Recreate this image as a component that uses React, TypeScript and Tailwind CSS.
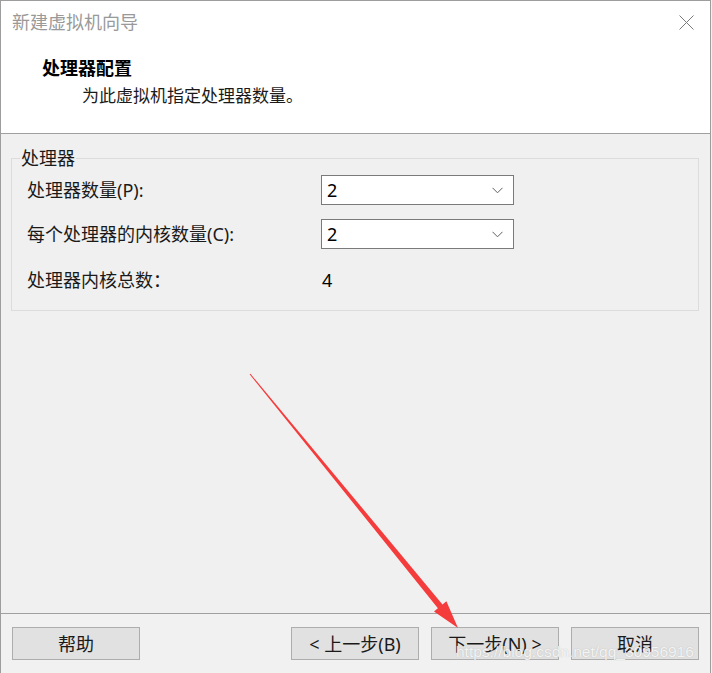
import React from 'react';

const font = { fontFamily: '"Noto Sans", "Noto Sans CJK SC", sans-serif' };

const Chevron = () => (
    <svg width="11" height="7" viewBox="0 0 11 7" className="text-[#606060]">
        <path d="M0.5 0.8 L5.5 5.8 L10.5 0.8" fill="none" stroke="currentColor" strokeWidth="1" />
    </svg>
);

const Select = ({ value }: { value: string }) => (
    <div className="w-[193px] h-[30px] bg-white border border-[#7a7a7a] flex items-center justify-between pl-[5px] pr-[10px]">
        <span className="text-[18px] text-black leading-none">{value}</span>
        <Chevron />
    </div>
);

const Btn = ({ label }: { label: string }) => (
    <button className="w-[128px] h-[33px] bg-[#e1e1e1] border border-[#adadad] text-[18px] text-[#1a1a1a] leading-none flex items-center justify-center">
        {label}
    </button>
);

export default function App() {
    return (
        <div className="w-[712px] h-[673px] bg-[#f0f0f0] relative overflow-hidden" style={font}>
            <div className="w-[711px] h-[673px] flex flex-col border-l border-t border-r border-[#9d9d9d]">
                {/* header */}
                <div className="h-[133px] bg-white border-b border-[#a0a0a0] flex flex-col shrink-0">
                    <div className="h-[42px] flex items-center justify-between pl-[11px] pr-[16px]">
                        <span className="text-[18px] text-[#999999]">新建虚拟机向导</span>
                        <svg width="15" height="15" viewBox="0 0 15 15">
                            <path d="M0.5 0.5 L14.5 14.5 M14.5 0.5 L0.5 14.5" stroke="#7a7a7a" strokeWidth="1" fill="none" />
                        </svg>
                    </div>
                    <div className="pl-[41px] pt-[12px] text-[18px] font-bold text-black leading-[26px]">处理器配置</div>
                    <div className="pl-[81px] pt-[2px] text-[17px] text-[#1a1a1a] leading-[26px]">为此虚拟机指定处理器数量。</div>
                </div>

                {/* body */}
                <div className="flex-1">
                    <div className="relative mt-[24px] ml-[10px] w-[688px] h-[153px] border border-[#dcdcdc] pl-[15px] pt-[16px]">
                        <span className="absolute left-[8px] -top-[14px] px-[1px] bg-[#f0f0f0] text-[18px] text-[#1a1a1a] leading-[26px]">处理器</span>
                        <div className="flex items-center h-[30px]">
                            <span className="w-[294px] text-[18px] text-[#1a1a1a]">处理器数量(P):</span>
                            <Select value="2" />
                        </div>
                        <div className="flex items-center h-[30px] mt-[14px]">
                            <span className="w-[294px] text-[18px] text-[#1a1a1a]">每个处理器的内核数量(C):</span>
                            <Select value="2" />
                        </div>
                        <div className="flex items-center h-[30px] mt-[16px]">
                            <span className="w-[294px] text-[18px] text-[#1a1a1a]">处理器内核总数：</span>
                            <span className="pl-[1px] text-[18px] text-black">4</span>
                        </div>
                    </div>
                </div>

                {/* footer */}
                <div className="h-[60px] shrink-0 border-t border-[#a0a0a0] bg-[#f1f1f1] flex items-start pt-[13px] px-[11px]">
                    <Btn label="帮助" />
                    <div className="flex-1" />
                    <div className="flex gap-[12px]">
                        <Btn label="< 上一步(B)" />
                        <Btn label="下一步(N) >" />
                        <Btn label="取消" />
                    </div>
                </div>
            </div>

            {/* annotation arrow */}
            <svg className="absolute inset-0 pointer-events-none" width="712" height="673" viewBox="0 0 712 673">
                <polygon
                    points="249.6,374.3 437.9,608.2 434,611.4 458,628 446.4,601.2 442.5,604.4 250.4,373.7"
                    fill="#f53c3c"
                />
            </svg>

            {/* watermark */}
            <span
                className="absolute left-[456px] top-[644px] text-[15.5px] text-white/85 leading-none pointer-events-none"
                style={{ fontFamily: '"Liberation Sans", Arial, sans-serif', textShadow: '0 0 1px rgba(120,120,120,0.5)' }}
            >
                https://blog.csdn.net/qq_30956916
            </span>
        </div>
    );
}
